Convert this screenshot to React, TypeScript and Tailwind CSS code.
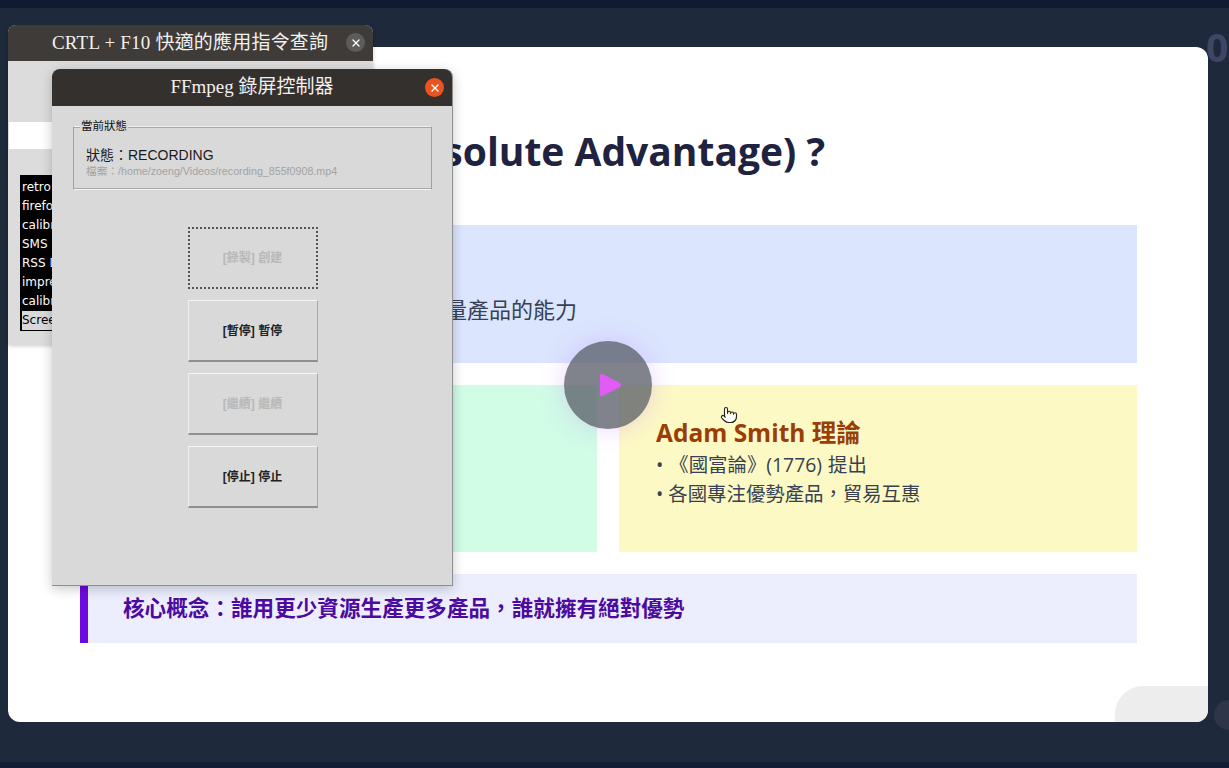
import { Pointer, X } from "lucide-react";

const cjk = "font-['Open_Sans','Noto_Sans_CJK_TC',sans-serif]";
const serif = "font-['Liberation_Serif','Noto_Sans_CJK_TC',serif]";
const ui = "font-['Liberation_Sans','Noto_Sans_CJK_TC',sans-serif]";

const listItems = ["retro", "firefox", "calibre", "SMS r", "RSS D", "impre", "calibre"];

function RecButton({ label, disabled, focused }: { label: string; disabled?: boolean; focused?: boolean }) {
  const edge = focused
    ? "border-2 border-dotted border-[#555555]"
    : "border border-b-2 border-t-[#f6f6f6] border-l-[#eeeeee] border-r-[#a8a8a8] border-b-[#8f8f8f]";
  return (
    <div
      className={`flex h-[62px] w-[130px] items-center justify-center text-[12px] font-bold ${edge} ${
        disabled ? "text-[#b8b8b8]" : "text-[#222222]"
      }`}
    >
      {label}
    </div>
  );
}

export default function App() {
  return (
    <div lang="zh-TW" className={`relative h-screen w-full overflow-hidden bg-[#1e293b] ${cjk}`}>
      <div className="h-2 bg-[#111a30]" />

      {/* slide */}
      <div className="ml-2 mt-[39px] h-[675px] w-[1200px] rounded-xl bg-white pl-[72px] pr-[71px] pt-[75px]">
        <h1 className="h-[60px] pr-[312px] text-right text-[39px] font-bold leading-[58px] whitespace-nowrap text-[#1f2340]">
          solute Advantage) ?
        </h1>
        <div className="mt-[43px] flex h-[138px] items-center bg-[#dbe5fe] pl-[365px] pt-[31px] text-[22px] text-[#374151]">
          量產品的能力
        </div>
        <div className="mt-[22px] flex h-[167px] gap-[22px]">
          <div className="w-[517px] bg-[#d1fce6]" />
          <div className="flex-1 bg-[#fdf9c4] pl-[37px] pt-[29px]">
            <h2 className="-mb-[2px] text-[24.5px] font-bold leading-[38px] text-[#9a3e08]">Adam Smith 理論</h2>
            <p className="text-[19.4px] leading-[29px] [word-spacing:1px] text-[#374151]">• 《國富論》(1776) 提出</p>
            <p className="text-[19.4px] leading-[29px] text-[#374151]">• 各國專注優勢產品，貿易互惠</p>
          </div>
        </div>
        <div className="mt-[22px] flex h-[69px] items-center border-l-8 border-[#6d0ae0] bg-[#eceefe] pl-[35px] text-[21.6px] font-bold text-[#4c0a9e]">
          核心概念：誰用更少資源生產更多產品，誰就擁有絕對優勢
        </div>
      </div>

      <div className="absolute bottom-0 left-0 h-[6px] w-full bg-[#141d33]" />

      {/* stray video controls around the slide */}
      <div className="absolute left-[1206px] top-[22px] text-[39px] font-bold leading-[50px] text-[#3f4664]">0</div>
      <div className="absolute left-[1115px] top-[686px] h-[36px] w-[93px] rounded-tl-[28px] rounded-br-xl bg-[#ededed]" />
      <div className="absolute left-[1214px] top-[700px] h-[30px] w-[30px] rounded-full bg-[#2f3548]" />

      {/* play button */}
      <div className="absolute left-[564px] top-[341px] flex h-[88px] w-[88px] items-center justify-center rounded-full bg-[#555a66]/75 shadow-[0_0_24px_rgba(190,120,255,0.3)]">
        <svg width="26" height="26" viewBox="0 0 26 26" className="ml-1">
          <path d="M3 3.5 Q3 1 5.5 2 L23 11 Q25 13 23 15 L5.5 24 Q3 25 3 22.5 Z" fill="#e05cf5" />
        </svg>
      </div>
      <Pointer className="absolute left-[720px] top-[406px] h-[18px] w-[18px] fill-white text-[#222222]" strokeWidth={1.5} />

      {/* back window */}
      <div className="absolute left-2 top-[25px] flex h-[320px] w-[365px] flex-col rounded-t-lg bg-[#dcdcdc] shadow-[0_1px_4px_rgba(0,0,0,0.2)]">
        <div className="relative flex h-[36px] shrink-0 items-center rounded-t-lg bg-[#3f3b39]">
          <span className={`ml-[44px] text-[19px] tracking-[0.2px] whitespace-nowrap text-[#f2f0ee] ${serif}`}>
            CRTL + F10 快適的應用指令查詢
          </span>
          <span className="absolute left-[338px] top-[8px] flex h-[19px] w-[19px] items-center justify-center rounded-full bg-[#5e5c5a]">
            <X className="h-3 w-3 text-white" strokeWidth={2.5} />
          </span>
        </div>
        <div className="mt-[61px] ml-px h-[27px] w-[340px] bg-white" />
        <div className="ml-3 mt-[26px] w-[340px] border border-black bg-black pl-px pt-[2px] font-['DejaVu_Sans',sans-serif] text-[12px] leading-[19px] text-white">
          {listItems.map((item, i) => (
            <div key={i}>{item}</div>
          ))}
          <div className="bg-[#d9d9d9] text-black outline-1 outline-dotted outline-black">Screenshot</div>
        </div>
      </div>

      {/* front window */}
      <div className="absolute left-[52px] top-[69px] flex h-[517px] w-[401px] flex-col rounded-t-lg border-b border-r border-[#8f8f8f] bg-[#d9d9d9] shadow-[0_3px_12px_rgba(0,0,0,0.22)]">
        <div className="relative flex h-[37px] shrink-0 items-center justify-center rounded-t-lg bg-[#33302e]">
          <span className={`text-[19px] whitespace-nowrap text-[#f2f0ee] ${serif}`}>FFmpeg 錄屏控制器</span>
          <span className="absolute left-[373px] top-[9px] flex h-[19px] w-[19px] items-center justify-center rounded-full bg-[#e95420]">
            <X className="h-3 w-3 text-white" strokeWidth={2.5} />
          </span>
        </div>
        <div className={`relative ml-[21px] mr-5 mt-5 h-[64px] border border-b-[#f4f4f4] border-l-[#a0a0a0] border-r-[#a0a0a0] border-t-[#f0f0f0] pl-3 pt-[19px] shadow-[inset_0_1px_0_#a8a8a8,inset_0_-1px_0_#a8a8a8] ${ui}`}>
          <span className="absolute -top-[8px] left-[6px] bg-[#d9d9d9] px-px text-[11.5px] leading-[14px] text-[#111111]">當前狀態</span>
          <p className="text-[14px] leading-[19px] text-[#1a1a1a]">狀態：RECORDING</p>
          <p className="text-[10.7px] leading-[13px] text-[#a3a3a3]">檔案：/home/zoeng/Videos/recording_855f0908.mp4</p>
        </div>
        <div className={`mt-[37px] flex flex-col items-center gap-[11px] pl-px ${ui}`}>
          <RecButton label="[錄製] 創建" disabled focused />
          <RecButton label="[暫停] 暫停" />
          <RecButton label="[繼續] 繼續" disabled />
          <RecButton label="[停止] 停止" />
        </div>
      </div>
    </div>
  );
}
